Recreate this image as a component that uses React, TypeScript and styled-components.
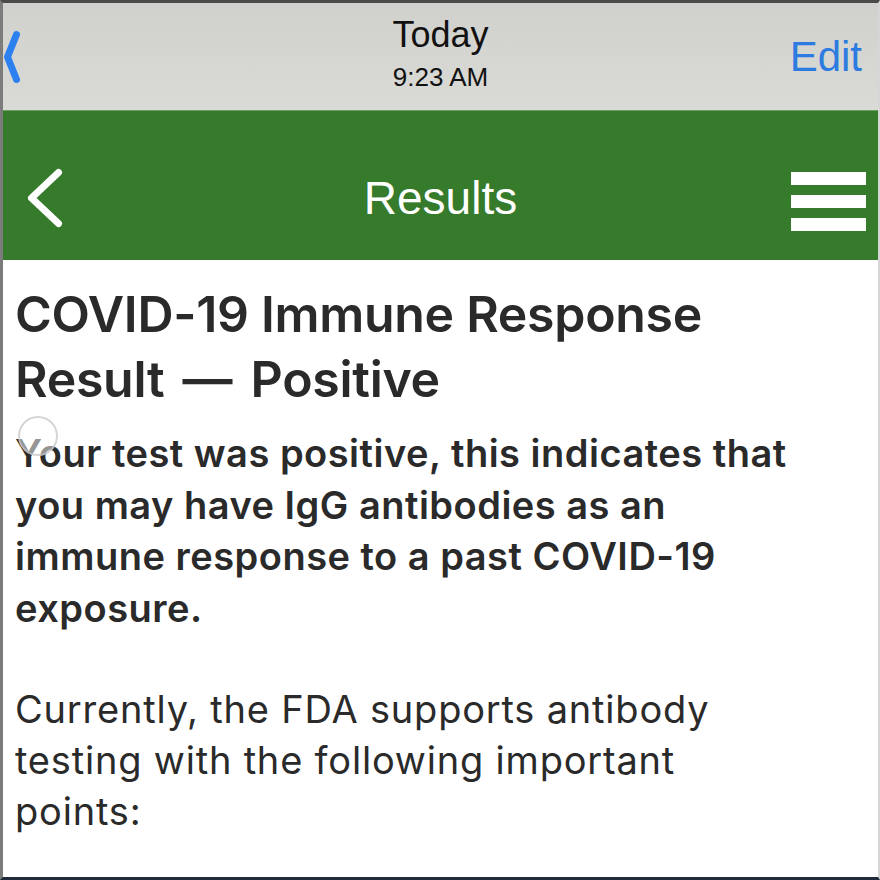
import React from 'react';
import styled, { createGlobalStyle } from 'styled-components';

const GlobalStyle = createGlobalStyle`
  html, body {
    margin: 0;
    padding: 0;
    background: #ffffff;
  }
`;

const Screen = styled.div`
  width: 880px;
  height: 880px;
  box-sizing: border-box;
  overflow: hidden;
  display: flex;
  flex-direction: column;
  border-top: 3px solid #4a4a48;
  border-left: 3px solid #7c7c7c;
  border-right: 2px solid #d6d6d6;
  border-bottom: 3px solid #1f2a3a;
  background: #ffffff;
`;

const MessageBar = styled.header`
  height: 107px;
  flex: none;
  display: grid;
  grid-template-columns: 1fr auto 1fr;
  align-items: center;
  background: linear-gradient(#d0d0cc, #dadad6);
  font-family: 'Liberation Sans', Arial, sans-serif;
`;

const BarSide = styled.div<{ $align: 'start' | 'end' }>`
  display: flex;
  justify-content: ${(p) => (p.$align === 'start' ? 'flex-start' : 'flex-end')};
  align-items: center;
  padding-right: ${(p) => (p.$align === 'end' ? '16px' : '0')};
`;

const Stamp = styled.div`
  display: flex;
  flex-direction: column;
  align-items: center;
  color: #111111;
  margin-top: -3px;
`;

const StampDay = styled.div`
  font-size: 36px;
  line-height: 40px;
`;

const StampTime = styled.div`
  margin-top: 4px;
  font-size: 26px;
  line-height: 36px;
`;

const EditButton = styled.span`
  color: #2c7be0;
  font-size: 42px;
`;

const AppBar = styled.nav`
  height: 150px;
  flex: none;
  display: grid;
  grid-template-columns: 1fr auto 1fr;
  align-items: center;
  padding-top: 24px;
  background: #367a2c;
  border-top: 1px solid #6aa05e;
  box-sizing: border-box;
  font-family: 'Liberation Sans', Arial, sans-serif;
`;

const BackSlot = styled.div`
  margin-left: 24px;
  display: flex;
`;

const AppTitle = styled.h1`
  margin: 0;
  color: #ffffff;
  font-size: 46px;
  font-weight: 400;
`;

const MenuButton = styled.div`
  width: 75px;
  display: flex;
  flex-direction: column;
  gap: 10px;
  margin: 8px 12px 0 auto;
`;

const MenuLine = styled.span`
  display: block;
  height: 13px;
  background: #ffffff;
`;

const Content = styled.main`
  flex: 1;
  padding: 22px 10px 0 12px;
  color: #2a2a2a;
  font-family: Inter, 'Noto Sans', sans-serif;
`;

const Heading = styled.h2`
  margin: 0;
  font-size: 50px;
  line-height: 65px;
  font-weight: 600;
  letter-spacing: -0.3px;
  white-space: nowrap;
`;

const Dash = styled.span`
  margin: 0 6px;
`;

const Lead = styled.p`
  position: relative;
  margin: 16px 0 0;
  font-size: 38px;
  line-height: 51.5px;
  font-weight: 600;
  letter-spacing: 0.5px;
  white-space: nowrap;
`;

const Body = styled.p`
  margin: 50px 0 0;
  font-size: 38px;
  line-height: 51px;
  font-weight: 400;
  letter-spacing: 0.8px;
  white-space: nowrap;
`;

const Watermark = styled.span`
  position: absolute;
  left: 3px;
  top: -12px;
  width: 36px;
  height: 36px;
  border-radius: 50%;
  border: 2px solid rgba(195, 195, 195, 0.7);
  background: rgba(255, 255, 255, 0.5);
  pointer-events: none;
`;

const Chevron = ({ color, width, height, stroke }: { color: string; width: number; height: number; stroke: number }) => (
  <svg width={width} height={height} viewBox={`0 0 ${width} ${height}`}>
    <polyline
      points={`${width - stroke / 2 - 1},${stroke / 2 + 1} ${stroke / 2 + 1},${height / 2} ${width - stroke / 2 - 1},${height - stroke / 2 - 1}`}
      fill="none"
      stroke={color}
      strokeWidth={stroke}
      strokeLinecap="round"
      strokeLinejoin="round"
    />
  </svg>
);

const App = () => {
  return (
    <>
      <GlobalStyle />
      <Screen>
        <MessageBar>
          <BarSide $align="start">
            <Chevron color="#2c80f0" width={18} height={54} stroke={7} />
          </BarSide>
          <Stamp>
            <StampDay>Today</StampDay>
            <StampTime>9:23 AM</StampTime>
          </Stamp>
          <BarSide $align="end">
            <EditButton>Edit</EditButton>
          </BarSide>
        </MessageBar>

        <AppBar>
          <BarSide $align="start">
            <BackSlot>
              <Chevron color="#ffffff" width={36} height={60} stroke={7} />
            </BackSlot>
          </BarSide>
          <AppTitle>Results</AppTitle>
          <MenuButton>
            <MenuLine />
            <MenuLine />
            <MenuLine />
          </MenuButton>
        </AppBar>

        <Content>
          <Heading>
            COVID-19 Immune Response
            <br />
            Result <Dash>—</Dash> Positive
          </Heading>
          <Lead>
            <Watermark />
            Your test was positive, this indicates that
            <br />
            you may have IgG antibodies as an
            <br />
            immune response to a past COVID-19
            <br />
            exposure.
          </Lead>
          <Body>
            Currently, the FDA supports antibody
            <br />
            testing with the following important
            <br />
            points:
          </Body>
        </Content>
      </Screen>
    </>
  );
};

export default App;
